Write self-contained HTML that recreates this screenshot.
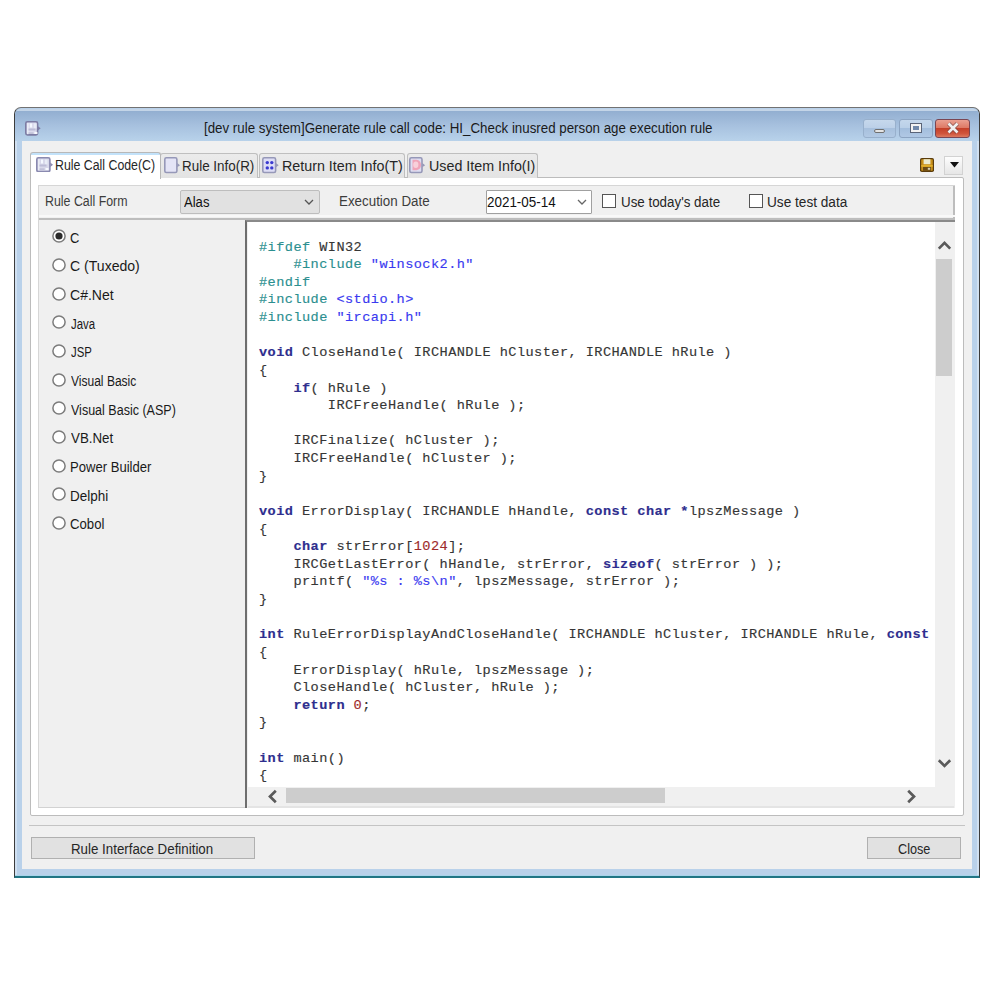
<!DOCTYPE html>
<html><head><meta charset="utf-8"><title>Rule call code</title><style>
*{margin:0;padding:0;box-sizing:border-box}
html,body{width:1000px;height:1000px;background:#fff;overflow:hidden;position:relative;font-family:"Liberation Sans",sans-serif}
.a{position:absolute}
.t{position:absolute;white-space:pre;transform-origin:0 0;font-family:"Liberation Sans",sans-serif}
.ic{position:absolute}
.radio{position:absolute;width:13.8px;height:13.8px;border-radius:50%;border:1.5px solid #7c7c7c;background:#fff}
.radio i{position:absolute;left:1.9px;top:1.9px;width:7px;height:7px;border-radius:50%;background:#2a2a2a}
.code{position:absolute;white-space:pre;font-family:"Liberation Mono",monospace;font-size:13.60px;line-height:17.62px;letter-spacing:0.440px;color:#363636;-webkit-text-stroke:0.15px currentColor}
.code b{font-weight:bold}
.chk{position:absolute;width:14.4px;height:14.4px;border:1.3px solid #555;background:#fff}
</style></head>
<body>
<!-- window frame -->
<div class="a" style="left:13.5px;top:107.2px;width:966.5px;height:770.8px;border:1.2px solid #3c3c3c;border-top:1.6px solid #727272;border-bottom:2px solid #217585;border-radius:7px 7px 0 0;background:#b9d1ea"></div>
<div class="a" style="left:15px;top:109px;width:963.5px;height:32.5px;border-radius:6px 6px 0 0;background:linear-gradient(#c3d4e7 0px,#c3d4e7 1.5px,#93afd1 2.5px,#a6c0de 16px,#b6d0e9 30px,#b9d2ea 32.5px)"></div>
<div class="a" style="left:15px;top:141px;width:1.6px;height:734px;background:#d0e0f1"></div>
<div class="a" style="left:977px;top:141px;width:1.6px;height:734px;background:#d0e0f1"></div>
<div class="a" style="left:15px;top:874.6px;width:963.5px;height:1.2px;background:#a8d4ea"></div>
<!-- client -->
<div class="a" style="left:22px;top:141px;width:950px;height:727.5px;background:#f0f0f0"></div>
<svg class="ic" style="left:25.1px;top:120.9px" width="17.4" height="14.7" viewBox="0 0 17.4 14.7"><rect x="0.8" y="0.8" width="11.8" height="13.1" rx="1.6" fill="#dcdcee" stroke="#7c7ca4" stroke-width="1.6"/><path d="M12.9 5.1499999999999995 L15.7 7.35 L12.9 9.55 Z" fill="#7c7ca4"/><rect x="2.2" y="2.2" width="1.3" height="11" fill="#eef0f8"/><rect x="5" y="2.5" width="2" height="4" fill="#f4f8ff"/><rect x="9" y="2.5" width="2.5" height="5" fill="#e8ecf6"/><rect x="3.5" y="7.5" width="7" height="2" fill="#bcbcd6"/><rect x="3.5" y="11.5" width="5" height="1.2" fill="#b8b8d0"/><ellipse cx="11" cy="12" rx="1.8" ry="1" fill="#fafcff"/></svg>
<span class="t" style="left:203.95px;top:120.70px;font-size:14px;line-height:14px;color:#1a1a1a;transform:scaleX(0.9512)">[dev rule system]Generate rule call code: HI_Check inusred person age execution rule</span>
<!-- caption buttons -->
<div class="a" style="left:863px;top:118.8px;width:32.5px;height:19.2px;border:1px solid #98b0cc;border-radius:3px;background:linear-gradient(#c6d8ec 0%,#bcd0e8 45%,#a7c0dd 50%,#b2c9e4 100%)"></div>
<div class="a" style="left:873.5px;top:128.8px;width:11px;height:4.6px;border-radius:2.3px;background:#e4e4e4;border:1.2px solid #707070"></div>
<div class="a" style="left:899.4px;top:118.8px;width:33.6px;height:19.2px;border:1px solid #8ca4c2;border-radius:3px;background:linear-gradient(#c4d7ec 0%,#bad0e8 45%,#a3bedd 50%,#b0c8e4 100%)"></div>
<div class="a" style="left:911px;top:124px;width:9.6px;height:8px;border:2.2px solid #f2f2f2;outline:1.1px solid #5a6478;background:#7088aa"></div>
<div class="a" style="left:935.4px;top:118.8px;width:34.8px;height:19.2px;border:1px solid #7a4653;border-radius:3px;background:linear-gradient(#eaa091 0%,#de7a66 45%,#c5412a 50%,#d0553c 80%,#dc7a60 100%)"></div>
<svg class="ic" style="left:945px;top:121px" width="16" height="15" viewBox="0 0 16 15"><path d="M3.5 2.5 L12.5 11.5 M12.5 2.5 L3.5 11.5" stroke="#6a4444" stroke-width="4.4" opacity=".6"/><path d="M3.5 2.5 L12.5 11.5 M12.5 2.5 L3.5 11.5" stroke="#f0f0f0" stroke-width="2.6"/></svg>

<!-- tab panel -->
<div class="a" style="left:29.5px;top:177.3px;width:934.5px;height:639px;border:1px solid #bcbcbc;border-radius:2px;background:#fff"></div>
<!-- inactive tabs -->
<div class="a" style="left:160px;top:153.2px;width:98px;height:24.5px;border:1px solid #bfbfbf;border-bottom:none;border-radius:3px 3px 0 0;background:linear-gradient(#ebebeb,#e3e3e3)"></div>
<div class="a" style="left:259px;top:153.2px;width:146px;height:24.5px;border:1px solid #bfbfbf;border-bottom:none;border-radius:3px 3px 0 0;background:linear-gradient(#ebebeb,#e3e3e3)"></div>
<div class="a" style="left:406.5px;top:153.2px;width:131.5px;height:24.5px;border:1px solid #bfbfbf;border-bottom:none;border-radius:3px 3px 0 0;background:linear-gradient(#ebebeb,#e3e3e3)"></div>
<!-- active tab -->
<div class="a" style="left:30px;top:151.8px;width:130.5px;height:27px;border:1px solid #b8b8b8;border-bottom:none;border-radius:3px 3px 0 0;background:linear-gradient(#c2e2fa 0px,#c2e2fa 2.2px,#fff 2.5px,#fff 100%)"></div>
<svg class="ic" style="left:35.5px;top:156.8px" width="18.7" height="15.4" viewBox="0 0 18.7 15.4"><rect x="0.8" y="0.8" width="13.1" height="13.8" rx="1.6" fill="#d8d8ea" stroke="#8a8ab0" stroke-width="1.6"/><path d="M14.2 5.5 L17.0 7.7 L14.2 9.9 Z" fill="#8a8ab0"/><rect x="2.2" y="2.2" width="1.3" height="11" fill="#eef0f8"/><rect x="5" y="2.5" width="2" height="4" fill="#f4f8ff"/><rect x="9" y="2.5" width="2.5" height="5" fill="#e8ecf6"/><rect x="3.5" y="7.5" width="7" height="2" fill="#bcbcd6"/><rect x="3.5" y="11.5" width="5" height="1.2" fill="#b8b8d0"/><ellipse cx="11" cy="12" rx="1.8" ry="1" fill="#fafcff"/></svg>
<svg class="ic" style="left:163.8px;top:157.4px" width="17.7" height="16.3" viewBox="0 0 17.7 16.3"><rect x="0.8" y="0.8" width="12.1" height="14.700000000000001" rx="1.6" fill="#e4e4f6" stroke="#9698b8" stroke-width="1.6"/><path d="M13.2 5.95 L16.0 8.15 L13.2 10.350000000000001 Z" fill="#9698b8"/></svg>
<svg class="ic" style="left:262.4px;top:157.4px" width="18.4" height="16.3" viewBox="0 0 18.4 16.3"><rect x="0.8" y="0.8" width="12.8" height="14.700000000000001" rx="1.6" fill="#dedef6" stroke="#9698b8" stroke-width="1.6"/><path d="M13.9 5.95 L16.7 8.15 L13.9 10.350000000000001 Z" fill="#9698b8"/><circle cx="5.3" cy="5.6" r="1.7" fill="#3a3ad0"/><circle cx="9.8" cy="5.6" r="1.7" fill="#3a3ad0"/><circle cx="5.3" cy="10.9" r="1.7" fill="#3a3ad0"/><circle cx="9.8" cy="10.9" r="1.7" fill="#3a3ad0"/></svg>
<svg class="ic" style="left:409px;top:157.4px" width="17.8" height="16.3" viewBox="0 0 17.8 16.3"><rect x="0.8" y="0.8" width="12.200000000000001" height="14.700000000000001" rx="1.6" fill="#dedef2" stroke="#9698b8" stroke-width="1.6"/><path d="M13.3 5.95 L16.1 8.15 L13.3 10.350000000000001 Z" fill="#9698b8"/><path d="M3.5 2.8 L7.5 2.8 Q12 3.5 12 8 Q12 12.5 7.5 13.2 L3.5 13.2 Z" fill="#f0a4b8"/><ellipse cx="6.8" cy="7.8" rx="2.6" ry="3.2" fill="#f8d0da"/></svg>
<!-- save icon -->
<svg class="ic" style="left:920.3px;top:157.5px" width="14" height="14" viewBox="0 0 14 14"><rect x="0" y="0" width="14" height="14" rx="1.8" fill="#5a3c0c"/><rect x="1.2" y="1.2" width="11.6" height="11.6" rx="0.8" fill="#c8901a"/><rect x="3.6" y="1.2" width="6.8" height="5" fill="#ecebd0"/><rect x="1.2" y="7.2" width="11.6" height="1.4" fill="#e8b830"/><rect x="3" y="9" width="8" height="3.8" fill="#6a4a14"/><rect x="7.8" y="9.8" width="2.4" height="2" fill="#d8d0b0"/></svg>
<div class="a" style="left:944px;top:156.2px;width:19.3px;height:18.5px;border:1px solid #d2d2d2;background:linear-gradient(#fdfdfd,#e6e6e6)"></div>
<svg class="ic" style="left:949.5px;top:162px" width="9" height="6" viewBox="0 0 9 6"><path d="M0 0 L9 0 L4.5 5.5 Z" fill="#111"/></svg>

<!-- form panel -->
<div class="a" style="left:37.8px;top:185px;width:917.5px;height:623px;border:1px solid #d6d6d6;border-right-color:#cfcfcf;border-bottom-color:#d2d2d2;background:#f0f0f0"></div>
<div class="a" style="left:953px;top:185.5px;width:2px;height:35px;background:#bdbdbd"></div>
<div class="a" style="left:38.5px;top:218.2px;width:916px;height:1.5px;background:#bdbdbd"></div>
<div class="a" style="left:38.5px;top:215px;width:916px;height:2px;background:#f8f8f8"></div>
<!-- combos -->
<div class="a" style="left:180.2px;top:189.8px;width:139.5px;height:23.8px;border:1px solid #bdbdbd;border-radius:2px;background:#e1e1e1"></div>
<svg class="ic" style="left:304px;top:198.5px" width="10" height="7" viewBox="0 0 10 7"><path d="M1 1 L5 5 L9 1" fill="none" stroke="#555" stroke-width="1.3"/></svg>
<div class="a" style="left:485.6px;top:189.8px;width:106.8px;height:24.1px;border:1px solid #a0a0a0;border-radius:1px;background:#fff"></div>
<svg class="ic" style="left:577px;top:198.5px" width="10" height="7" viewBox="0 0 10 7"><path d="M1 1 L5 5 L9 1" fill="none" stroke="#666" stroke-width="1.3"/></svg>
<div class="chk" style="left:602px;top:194px"></div>
<div class="chk" style="left:748.6px;top:194px"></div>

<!-- code box -->
<div class="a" style="left:245.3px;top:219.5px;width:709.7px;height:588px;background:#f0f0f0;border-left:2.7px solid #6e6e6e;border-top:2.5px solid #8a8a8a"></div>
<div class="a" style="left:248px;top:222px;width:687px;height:565px;background:#fff;overflow:hidden"><div class="code" style="left:11.00px;top:16.56px"><span style="color:#2b8f8f">#ifdef</span> WIN32
    <span style="color:#2b8f8f">#include</span> <span style="color:#3a3af0">&quot;winsock2.h&quot;</span>
<span style="color:#2b8f8f">#endif</span>
<span style="color:#2b8f8f">#include</span> <span style="color:#3a3af0">&lt;stdio.h&gt;</span>
<span style="color:#2b8f8f">#include</span> <span style="color:#3a3af0">&quot;ircapi.h&quot;</span>

<b style="color:#2e2e8e">void</b> CloseHandle( IRCHANDLE hCluster, IRCHANDLE hRule )
{
    <b style="color:#2e2e8e">if</b>( hRule )
        IRCFreeHandle( hRule );

    IRCFinalize( hCluster );
    IRCFreeHandle( hCluster );
}

<b style="color:#2e2e8e">void</b> ErrorDisplay( IRCHANDLE hHandle, <b style="color:#2e2e8e">const char *</b>lpszMessage )
{
    <b style="color:#2e2e8e">char</b> strError[<span style="color:#9e2a2a">1024</span>];
    IRCGetLastError( hHandle, strError, <b style="color:#2e2e8e">sizeof</b>( strError ) );
    printf( <span style="color:#3a3af0">&quot;%s : %s\n&quot;</span>, lpszMessage, strError );
}

<b style="color:#2e2e8e">int</b> RuleErrorDisplayAndCloseHandle( IRCHANDLE hCluster, IRCHANDLE hRule, <b style="color:#2e2e8e">const</b> IRCHANDLE hRule
{
    ErrorDisplay( hRule, lpszMessage );
    CloseHandle( hCluster, hRule );
    <b style="color:#2e2e8e">return</b> <span style="color:#9e2a2a">0</span>;
}

<b style="color:#2e2e8e">int</b> main()
{</div></div>
<!-- v scrollbar -->
<div class="a" style="left:935.5px;top:259px;width:16px;height:117.3px;background:#cdcdcd"></div>
<svg class="ic" style="left:936.5px;top:239.5px" width="15" height="11" viewBox="0 0 15 11"><path d="M1.8 8.6 L7.5 2.9 L13.2 8.6" fill="none" stroke="#5a5a5a" stroke-width="2.7"/></svg>
<svg class="ic" style="left:936.5px;top:757.5px" width="15" height="11" viewBox="0 0 15 11"><path d="M1.8 2.2 L7.5 7.9 L13.2 2.2" fill="none" stroke="#5a5a5a" stroke-width="2.7"/></svg>
<!-- h scrollbar -->
<div class="a" style="left:285.5px;top:787.8px;width:379px;height:15.6px;background:#cdcdcd"></div>
<svg class="ic" style="left:265.5px;top:789px" width="13" height="15" viewBox="0 0 13 15"><path d="M9.8 1.8 L4 7.5 L9.8 13.2" fill="none" stroke="#5a5a5a" stroke-width="2.7"/></svg>
<svg class="ic" style="left:904.5px;top:789px" width="13" height="15" viewBox="0 0 13 15"><path d="M3.2 1.8 L9 7.5 L3.2 13.2" fill="none" stroke="#5a5a5a" stroke-width="2.7"/></svg>
<div class="a" style="left:248px;top:806px;width:706px;height:1.5px;background:#e4e4e4"></div>

<span class="t" style="left:70.18px;top:230.70px;font-size:14px;line-height:14px;color:#1a1a1a;transform:scaleX(0.9222)">C</span><svg class="ic" style="left:50.8px;top:228.20px" width="16" height="16" viewBox="0 0 16 16"><circle cx="8" cy="8" r="6.1" fill="#fff" stroke="#7c7c7c" stroke-width="1.5"/><circle cx="8" cy="8" r="3.6" fill="#2a2a2a"/></svg><span class="t" style="left:70.10px;top:259.37px;font-size:14px;line-height:14px;color:#1a1a1a;transform:scaleX(1.0044)">C (Tuxedo)</span><svg class="ic" style="left:50.8px;top:256.87px" width="16" height="16" viewBox="0 0 16 16"><circle cx="8" cy="8" r="6.1" fill="#fff" stroke="#7c7c7c" stroke-width="1.5"/></svg><span class="t" style="left:70.10px;top:288.04px;font-size:14px;line-height:14px;color:#1a1a1a;transform:scaleX(1.0023)">C#.Net</span><svg class="ic" style="left:50.8px;top:285.54px" width="16" height="16" viewBox="0 0 16 16"><circle cx="8" cy="8" r="6.1" fill="#fff" stroke="#7c7c7c" stroke-width="1.5"/></svg><span class="t" style="left:71.10px;top:316.71px;font-size:14px;line-height:14px;color:#1a1a1a;transform:scaleX(0.8167)">Java</span><svg class="ic" style="left:50.8px;top:314.21px" width="16" height="16" viewBox="0 0 16 16"><circle cx="8" cy="8" r="6.1" fill="#fff" stroke="#7c7c7c" stroke-width="1.5"/></svg><span class="t" style="left:71.10px;top:345.38px;font-size:14px;line-height:14px;color:#1a1a1a;transform:scaleX(0.8120)">JSP</span><svg class="ic" style="left:50.8px;top:342.88px" width="16" height="16" viewBox="0 0 16 16"><circle cx="8" cy="8" r="6.1" fill="#fff" stroke="#7c7c7c" stroke-width="1.5"/></svg><span class="t" style="left:71.10px;top:374.05px;font-size:14px;line-height:14px;color:#1a1a1a;transform:scaleX(0.8592)">Visual Basic</span><svg class="ic" style="left:50.8px;top:371.55px" width="16" height="16" viewBox="0 0 16 16"><circle cx="8" cy="8" r="6.1" fill="#fff" stroke="#7c7c7c" stroke-width="1.5"/></svg><span class="t" style="left:71.10px;top:402.72px;font-size:14px;line-height:14px;color:#1a1a1a;transform:scaleX(0.8940)">Visual Basic (ASP)</span><svg class="ic" style="left:50.8px;top:400.22px" width="16" height="16" viewBox="0 0 16 16"><circle cx="8" cy="8" r="6.1" fill="#fff" stroke="#7c7c7c" stroke-width="1.5"/></svg><span class="t" style="left:71.10px;top:431.39px;font-size:14px;line-height:14px;color:#1a1a1a;transform:scaleX(0.9523)">VB.Net</span><svg class="ic" style="left:50.8px;top:428.89px" width="16" height="16" viewBox="0 0 16 16"><circle cx="8" cy="8" r="6.1" fill="#fff" stroke="#7c7c7c" stroke-width="1.5"/></svg><span class="t" style="left:70.17px;top:460.06px;font-size:14px;line-height:14px;color:#1a1a1a;transform:scaleX(0.9337)">Power Builder</span><svg class="ic" style="left:50.8px;top:457.56px" width="16" height="16" viewBox="0 0 16 16"><circle cx="8" cy="8" r="6.1" fill="#fff" stroke="#7c7c7c" stroke-width="1.5"/></svg><span class="t" style="left:70.14px;top:488.73px;font-size:14px;line-height:14px;color:#1a1a1a;transform:scaleX(0.9605)">Delphi</span><svg class="ic" style="left:50.8px;top:486.23px" width="16" height="16" viewBox="0 0 16 16"><circle cx="8" cy="8" r="6.1" fill="#fff" stroke="#7c7c7c" stroke-width="1.5"/></svg><span class="t" style="left:70.16px;top:517.40px;font-size:14px;line-height:14px;color:#1a1a1a;transform:scaleX(0.9400)">Cobol</span><svg class="ic" style="left:50.8px;top:514.90px" width="16" height="16" viewBox="0 0 16 16"><circle cx="8" cy="8" r="6.1" fill="#fff" stroke="#7c7c7c" stroke-width="1.5"/></svg>

<!-- bottom -->
<div class="a" style="left:29px;top:824.5px;width:936px;height:1.4px;background:#c4c4c4"></div>
<div class="a" style="left:31px;top:837px;width:224.2px;height:21.8px;border:1px solid #b0b0b0;background:#e1e1e1"></div>
<div class="a" style="left:867.2px;top:837px;width:94px;height:21.6px;border:1px solid #b0b0b0;background:#e1e1e1"></div>

<span class="t" style="left:55.02px;top:157.80px;font-size:14px;line-height:14px;color:#262626;transform:scaleX(0.8812)">Rule Call Code(C)</span><span class="t" style="left:182.14px;top:158.90px;font-size:14px;line-height:14px;color:#262626;transform:scaleX(0.9581)">Rule Info(R)</span><span class="t" style="left:281.98px;top:158.90px;font-size:14px;line-height:14px;color:#262626;transform:scaleX(1.0207)">Return Item Info(T)</span><span class="t" style="left:428.58px;top:158.90px;font-size:14px;line-height:14px;color:#262626;transform:scaleX(1.0196)">Used Item Info(I)</span><span class="t" style="left:44.72px;top:194.40px;font-size:14px;line-height:14px;color:#3c3c3c;transform:scaleX(0.8837)">Rule Call Form</span><span class="t" style="left:184.40px;top:194.80px;font-size:14px;line-height:14px;color:#111111;transform:scaleX(0.9333)">Alas</span><span class="t" style="left:338.95px;top:194.30px;font-size:14px;line-height:14px;color:#3c3c3c;transform:scaleX(0.9543)">Execution Date</span><span class="t" style="left:486.94px;top:194.60px;font-size:14px;line-height:14px;color:#111111;transform:scaleX(0.9586)">2021-05-14</span><span class="t" style="left:621.35px;top:194.50px;font-size:14px;line-height:14px;color:#262626;transform:scaleX(0.9539)">Use today&#x27;s date</span><span class="t" style="left:766.63px;top:194.50px;font-size:14px;line-height:14px;color:#262626;transform:scaleX(0.9732)">Use test data</span><span class="t" style="left:71.25px;top:841.60px;font-size:14px;line-height:14px;color:#262626;transform:scaleX(0.9514)">Rule Interface Definition</span><span class="t" style="left:897.59px;top:842.00px;font-size:14px;line-height:14px;color:#262626;transform:scaleX(0.9059)">Close</span>
</body></html>
